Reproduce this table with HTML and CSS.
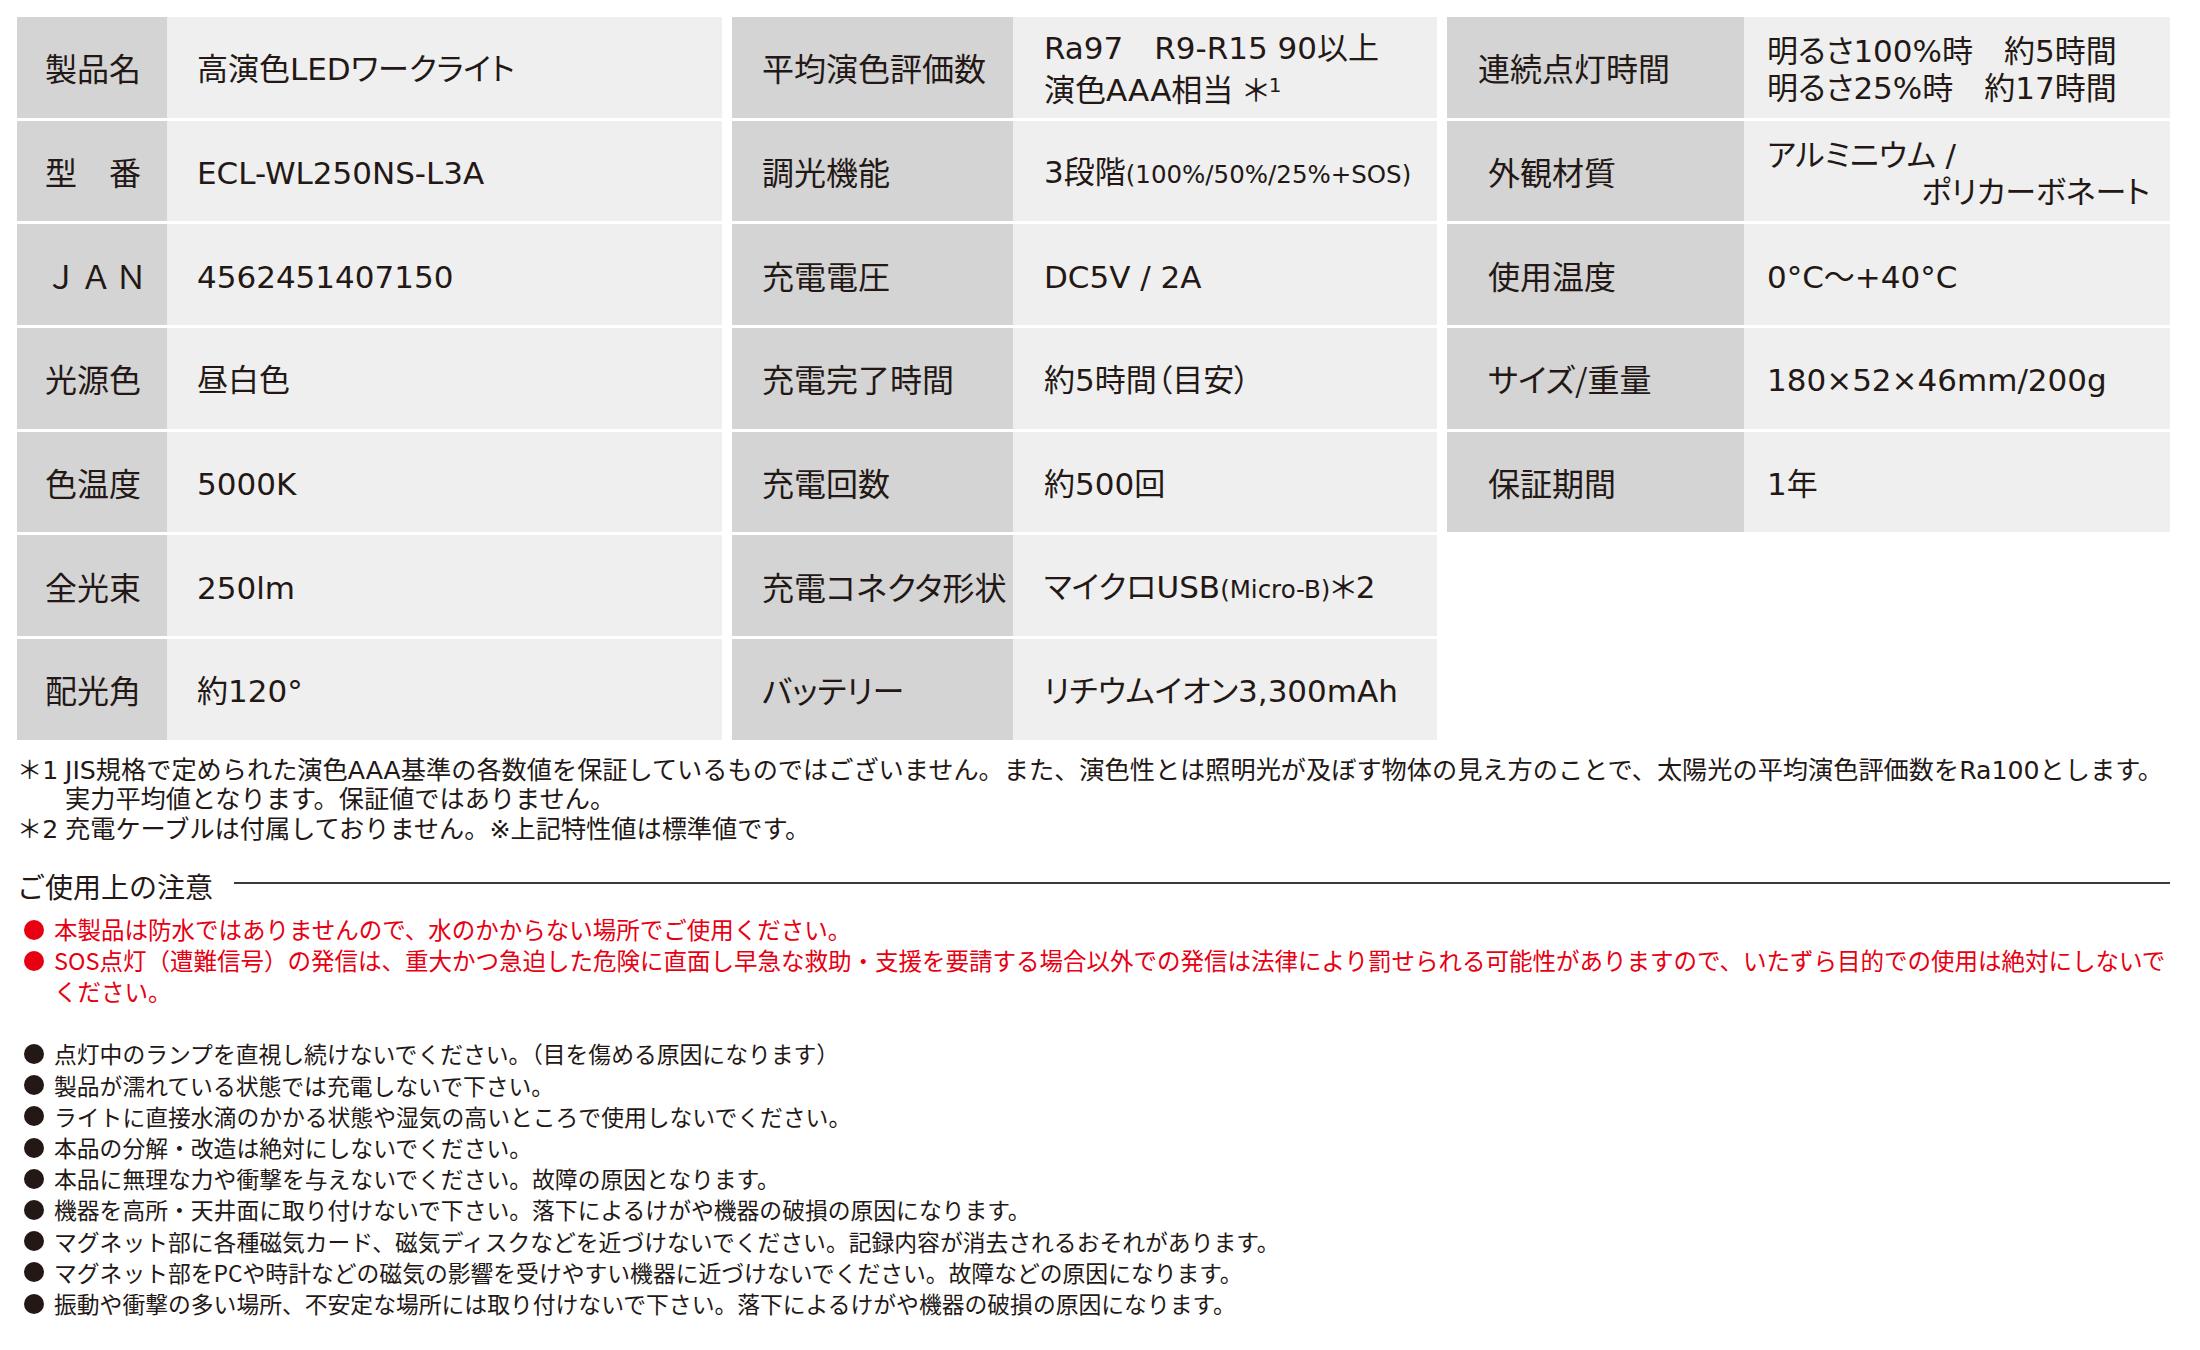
FILE: index.html
```html
<!DOCTYPE html>
<html lang="ja">
<head>
<meta charset="utf-8">
<title>高演色LEDワークライト 仕様</title>
<link rel="stylesheet" href="styles.css">
</head>
<body>
<div class="page">
  <div class="spec">
    <div class="group g1">
      <div class="lab">製品名</div><div class="val">高演色LEDワークライト</div>
      <div class="lab">型　番</div><div class="val">ECL-WL250NS-L3A</div>
      <div class="lab jan">ＪＡＮ</div><div class="val">4562451407150</div>
      <div class="lab">光源色</div><div class="val">昼白色</div>
      <div class="lab">色温度</div><div class="val">5000K</div>
      <div class="lab">全光束</div><div class="val">250lm</div>
      <div class="lab">配光角</div><div class="val">約120°</div>
    </div>
    <div class="group g2">
      <div class="lab">平均演色評価数</div><div class="val"><span>Ra97　R9-R15 90以上</span><span>演色AAA相当 ＊<span class="sup">1</span></span></div>
      <div class="lab">調光機能</div><div class="val"><span>3段階<span class="small">(100%/50%/25%+SOS)</span></span></div>
      <div class="lab">充電電圧</div><div class="val">DC5V / 2A</div>
      <div class="lab">充電完了時間</div><div class="val">約5時間（目安）</div>
      <div class="lab">充電回数</div><div class="val">約500回</div>
      <div class="lab">充電コネクタ形状</div><div class="val"><span>マイクロUSB<span class="small">(Micro-B)</span>＊2</span></div>
      <div class="lab">バッテリー</div><div class="val">リチウムイオン3,300mAh</div>
    </div>
    <div class="group g3">
      <div class="lab first">連続点灯時間</div><div class="val"><span>明るさ100%時　約5時間</span><span>明るさ25%時　約17時間</span></div>
      <div class="lab">外観材質</div><div class="val"><span>アルミニウム /</span><span class="right">ポリカーボネート</span></div>
      <div class="lab">使用温度</div><div class="val">0°C～+40°C</div>
      <div class="lab">サイズ/重量</div><div class="val">180×52×46mm/200g</div>
      <div class="lab">保証期間</div><div class="val">1年</div>
    </div>
  </div>

  <div class="footnotes">
    <div class="fn"><span class="fn-mark">＊1</span><span class="fn-text">JIS規格で定められた演色AAA基準の各数値を保証しているものではございません。また、演色性とは照明光が及ぼす物体の見え方のことで、太陽光の平均演色評価数をRa100とします。<br>実力平均値となります。保証値ではありません。</span></div>
    <div class="fn"><span class="fn-mark">＊2</span><span class="fn-text">充電ケーブルは付属しておりません。※上記特性値は標準値です。</span></div>
  </div>

  <div class="caution-head"><span class="caution-title">ご使用上の注意</span><span class="rule"></span></div>

  <ul class="notes red">
    <li><span class="dot"></span><span class="txt">本製品は防水ではありませんので、水のかからない場所でご使用ください。</span></li>
    <li><span class="dot"></span><span class="txt">SOS点灯（遭難信号）の発信は、重大かつ急迫した危険に直面し早急な救助・支援を要請する場合以外での発信は法律により罰せられる可能性がありますので、いたずら目的での使用は絶対にしないで<br>ください。</span></li>
  </ul>

  <ul class="notes black">
    <li><span class="dot"></span><span class="txt">点灯中のランプを直視し続けないでください。（目を傷める原因になります）</span></li>
    <li><span class="dot"></span><span class="txt">製品が濡れている状態では充電しないで下さい。</span></li>
    <li><span class="dot"></span><span class="txt">ライトに直接水滴のかかる状態や湿気の高いところで使用しないでください。</span></li>
    <li><span class="dot"></span><span class="txt">本品の分解・改造は絶対にしないでください。</span></li>
    <li><span class="dot"></span><span class="txt">本品に無理な力や衝撃を与えないでください。故障の原因となります。</span></li>
    <li><span class="dot"></span><span class="txt">機器を高所・天井面に取り付けないで下さい。落下によるけがや機器の破損の原因になります。</span></li>
    <li><span class="dot"></span><span class="txt">マグネット部に各種磁気カード、磁気ディスクなどを近づけないでください。記録内容が消去されるおそれがあります。</span></li>
    <li><span class="dot"></span><span class="txt">マグネット部をPCや時計などの磁気の影響を受けやすい機器に近づけないでください。故障などの原因になります。</span></li>
    <li><span class="dot"></span><span class="txt">振動や衝撃の多い場所、不安定な場所には取り付けないで下さい。落下によるけがや機器の破損の原因になります。</span></li>
  </ul>
</div>
</body>
</html>
```

FILE: styles.css
```css
html, body {
  margin: 0;
  padding: 0;
  background: #ffffff;
}

body {
  color: #231815;
  font-family: "Noto Sans CJK JP", sans-serif;
}

.page {
  padding: 17px 0 0 17px;
  width: 2153px;
}

/* ---------- spec table ---------- */
.spec {
  display: flex;
  gap: 10px;
  align-items: flex-start;
}

.group {
  display: grid;
  grid-auto-rows: 100.7px;
  row-gap: 3px;
}

.g1 { grid-template-columns: 150px 555px; }
.g2 { grid-template-columns: 281px 424px; }
.g3 { grid-template-columns: 297px 426px; }

.lab {
  background: #d4d4d4;
  display: flex;
  align-items: center;
  padding-left: 28px;
  font-size: 32px;
  line-height: 1.2;
  white-space: nowrap;
  font-feature-settings: "palt";
}

.g2 .lab { padding-left: 30px; }
.g3 .lab { padding-left: 41px; }
.g3 .lab.first { padding-left: 31px; }

.lab.jan {
  letter-spacing: 3px;
  font-feature-settings: normal;
}

.val {
  background: #eeefee;
  display: flex;
  flex-direction: column;
  justify-content: center;
  padding: 5px 20px 0 30px;
  font-family: "DejaVu Sans", "Noto Sans CJK JP", sans-serif;
  font-size: 31px;
  line-height: 37px;
  white-space: nowrap;
  font-feature-settings: "palt";
}

.g2 .val { padding-left: 31px; }
.g3 .val { padding-left: 23px; }

.val .right {
  text-align: right;
}

.small {
  font-size: 24.5px;
}

.sup {
  font-size: 20px;
  vertical-align: 9px;
}

/* ---------- footnotes ---------- */
.footnotes {
  margin-top: 16px;
  font-family: "DejaVu Sans", "Noto Sans CJK JP", sans-serif;
  font-size: 25.2px;
  line-height: 29.5px;
  white-space: nowrap;
}

.fn {
  display: flex;
}

.fn-mark {
  width: 48px;
  flex: none;
}

/* ---------- caution ---------- */
.caution-head {
  margin-top: 25px;
  display: flex;
  align-items: center;
  font-size: 28px;
  line-height: 34px;
}

.rule {
  flex: 1;
  height: 2px;
  background: #3a3a3a;
  margin-left: 21px;
  margin-bottom: 6px;
}

.notes {
  list-style: none;
  margin: 0;
  padding: 0;
}

.notes li {
  display: flex;
  align-items: flex-start;
}

.dot {
  flex: none;
  width: 20px;
  height: 20px;
  border-radius: 50%;
  background: currentColor;
  margin-left: 7px;
  margin-right: 10px;
}

.notes.red {
  margin-top: 11px;
  color: #e60012;
  font-size: 23.5px;
  line-height: 31px;
}

.notes.red .dot { margin-top: 5.5px; }

.notes.red .txt { white-space: nowrap; }

.notes.black {
  margin-top: 31px;
  font-size: 22.8px;
  line-height: 31.2px;
  white-space: nowrap;
}

.notes.black .dot { margin-top: 5.6px; }
```
